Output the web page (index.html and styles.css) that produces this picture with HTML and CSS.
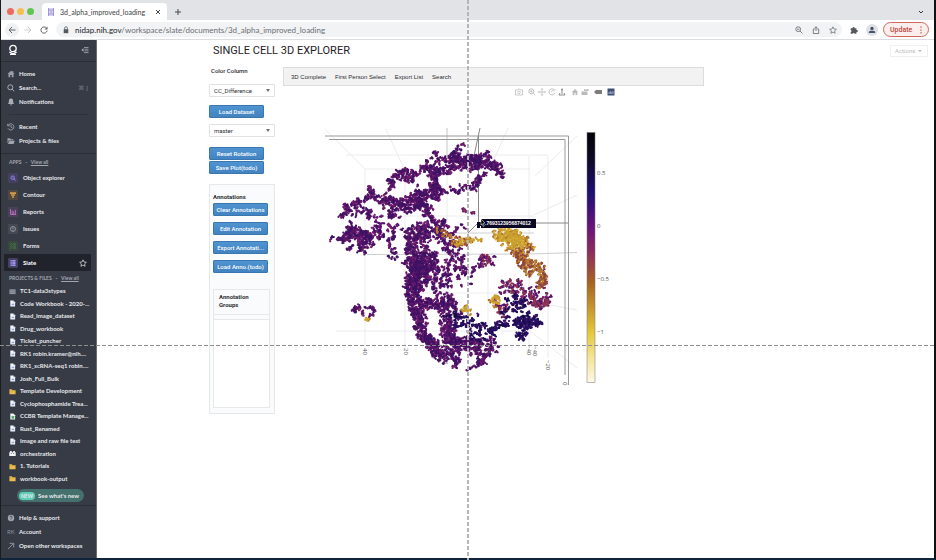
FILE: index.html
```html
<!DOCTYPE html>
<html lang="en">
<head>
  <meta charset="UTF-8" />
  <title>3d_alpha_improved_loading</title>
  <meta name="viewport" content="width=device-width, initial-scale=1.0" />
  <link rel="stylesheet" href="styles.css">
</head>
<body>

  <!-- Icons shared by the sidebar -->
  <svg class="defs" width="0" height="0">
    <symbol id="doc" viewBox="0 0 8 8"><path d="M1.500 .5h3.500l2 2v5H1.500z" fill="#f3f6fb"/><path d="M3 4.200h3v1.800H3z" fill="#8fa9d8"/><path d="M5 .5v2h2z" fill="#9aa3b5"/></symbol>
    <symbol id="sheet" viewBox="0 0 8 8"><path d="M1.500 .5h3.500l2 2v5H1.500z" fill="#eef6f0"/><path d="M3 3.500h3v3H3z" fill="#4aa56c"/></symbol>
    <symbol id="folder" viewBox="0 0 8 8"><path d="M.5 1.500h2.700l.8 1h3.500v4.500h-7z" fill="#e8bd4c"/><path d="M.5 3.200h7" stroke="#c99a2e" stroke-width=".4"/></symbol>
    <symbol id="table" viewBox="0 0 8 8"><path d="M.5 1.500h7v5.500h-7z" fill="#8f959f"/><path d="M.5 3.200h7M.5 5h7" stroke="#6b717c" stroke-width=".5"/></symbol>
    <symbol id="robot" viewBox="0 0 8 8"><path d="M1.200 1.200h2v1.300h1.600V1.200h2v1.300h.9v4.300H.3V2.500h.9z" fill="#f0f2f5"/><path d="M2 4h1.200M4.800 4H6" stroke="#4a505c" stroke-width=".8"/></symbol>
  </svg>

  <div class="window">
    <header class="tabstrip">
      <span class="light red"></span>
      <span class="light yellow"></span>
      <span class="light green"></span>
      <div class="browser-tab">
        <svg width="8" height="10" viewBox="0 0 8 10"><path d="M1 1h6v8H1z" fill="#d9d4f3"/><path d="M1.500 1v8M6.500 1v8M1 3h6M1 7h6M3 5h2" stroke="#8c7fcf" stroke-width=".7" fill="none"/></svg>
        <span>3d_alpha_improved_loading</span>
        <button class="bare" aria-label="Close tab"><svg width="6" height="6" viewBox="0 0 6 6"><path d="M1 1l4 4M5 1L1 5" stroke="#45484d"/></svg></button>
      </div>
      <button class="bare" aria-label="New tab"><svg width="8" height="8" viewBox="0 0 8 8"><path d="M4 1v6M1 4h6" stroke="#45484d"/></svg></button>
      <button class="bare tab-menu" aria-label="Tab search"><svg width="6" height="6" viewBox="0 0 6 6"><path d="M1 2l2 2 2-2" stroke="#333" fill="none"/></svg></button>
    </header>

    <div class="toolbar">
      <button class="bare back" aria-label="Back"><svg width="8" height="8" viewBox="0 0 8 8"><path d="M7.500 4H1M4 1L1 4l3 3" stroke="#5f6368" fill="none"/></svg></button>
      <button class="bare" aria-label="Forward"><svg width="8" height="8" viewBox="0 0 8 8"><path d="M.5 4H7M4 1l3 3-3 3" stroke="#c4c6c9" fill="none" stroke-width=".9"/></svg></button>
      <button class="bare" aria-label="Reload"><svg width="8" height="8" viewBox="0 0 8 8"><path d="M6.600 2.300A3.100 3.100 0 1 0 7.100 4.600" stroke="#5f6368" fill="none"/><path d="M7.500 .5v3h-3z" fill="#5f6368"/></svg></button>
      <div class="address">
        <svg width="6" height="8" viewBox="0 0 6 8"><path d="M.7 3.200h4.600v4H.7z" fill="#55585c"/><path d="M1.600 3.500V2.200a1.400 1.400 0 0 1 2.800 0v1.300" stroke="#55585c" fill="none" stroke-width=".8"/></svg>
        <p><b>nidap.nih.gov</b>/workspace/slate/documents/3d_alpha_improved_loading</p>
        <svg width="8" height="8" viewBox="0 0 8 8"><circle cx="3.200" cy="3.200" r="2.400" stroke="#5f6368" fill="none" stroke-width=".8"/><path d="M2 3.200h2.400M5 5l2.500 2.500" stroke="#5f6368" stroke-width=".8"/></svg>
        <svg width="8" height="8" viewBox="0 0 8 8"><path d="M2.800 3H1.300v4.500h5.400V3H5.200M4 5V.8M2.600 2L4 .7 5.400 2" stroke="#5f6368" fill="none" stroke-width=".8"/></svg>
        <svg width="8" height="8" viewBox="0 0 8 8"><path d="M4 .8l1 2.200 2.400.3-1.800 1.600.5 2.400L4 6.100 1.900 7.300l.5-2.400L.6 3.300 3 3z" stroke="#5f6368" fill="none" stroke-width=".7"/></svg>
      </div>
      <svg class="puzzle" width="8" height="8" viewBox="0 0 8 8"><path d="M.7 2.200h1.800a1.100 1.100 0 1 1 2.200 0h1.700V4a1.100 1.100 0 1 1 0 2.100v1.600H4.600a1.100 1.100 0 0 0-2.100 0H.7V6a1.100 1.100 0 0 0 0-2.100z" fill="#55585c"/></svg>
      <span class="avatar"><svg width="8" height="8" viewBox="0 0 8 8"><circle cx="4" cy="2.500" r="1.700" fill="#4b5368"/><path d="M.8 7V6c0-1.800 6.400-1.800 6.400 0v1z" fill="#4b5368"/></svg></span>
      <button class="update">Update <svg width="2" height="8" viewBox="0 0 2 8"><path d="M.4.5h1.200v1.300H.4zM.4 3.400h1.200v1.300H.4zM.4 6.300h1.200v1.300H.4z" fill="#c5453a"/></svg></button>
    </div>

    <div class="content">
      <nav class="sidebar">
        <div class="brand">
          <svg width="10" height="12" viewBox="0 0 10 12"><circle cx="5" cy="4.500" r="3.200" stroke="#fff" stroke-width="1.300" fill="none"/><path d="M1.300 8L5 9.900 8.700 8M2 10.400h6" stroke="#fff" fill="none" stroke-width="1.200"/></svg>
          <button class="bare" aria-label="Collapse"><svg width="8" height="8" viewBox="0 0 8 8"><path d="M3 1.500h4.500M3.500 3.200h4M3.500 4.900h4M3 6.600h4.500" stroke="#b8bcc4" stroke-width=".7"/><path d="M.5 4l2-1.700v3.400z" fill="#b8bcc4"/></svg></button>
        </div>

        <div class="links">
          <a href="#"><svg width="8" height="8" viewBox="0 0 8 8"><path d="M4 .7L.5 4h1v3.300h1.700V5h1.600v2.300h1.700V4h1L6.300 2.800V1h-1v.9z" fill="#9a9fa9"/></svg>Home</a>
          <a href="#"><svg width="8" height="8" viewBox="0 0 8 8"><circle cx="3.300" cy="3.300" r="2.500" stroke="#a9adb6" fill="none"/><path d="M5 5l2.300 2.300" stroke="#a9adb6"/></svg>Search...<kbd>⌘ J</kbd></a>
          <a href="#"><svg width="8" height="8" viewBox="0 0 8 8"><path d="M4 .6c1.700 0 2.100 1.100 2.100 2.500 0 1.600.4 2.200 1 2.900H.9c.6-.7 1-1.300 1-2.900C1.900 1.700 2.300.6 4 .6zM3 6.500h2c0 1.200-2 1.200-2 0z" fill="#a9adb6"/></svg>Notifications</a>
        </div>
        <div class="links recent">
          <a href="#"><svg width="8" height="8" viewBox="0 0 8 8"><path d="M1 2.500A3.100 3.100 0 1 1 1 5.300M4 2v2.200l1.500 1M.7.8v2h2" stroke="#a9adb6" fill="none" stroke-width=".8"/></svg>Recent</a>
          <a href="#"><svg width="8" height="8" viewBox="0 0 8 8"><path d="M.5 1.300h2.500l.8 1h2.500v1H1.800L.5 6.500z M2.200 3.800h5.600L6.600 7H1z" fill="#9fa4ad"/></svg>Projects &amp; files</a>
        </div>

        <h2>APPS <i>·</i> <a href="#">View all</a></h2>
        <div class="apps">
          <a href="#"><span class="tile violet"><svg width="6" height="6" viewBox="0 0 6 6"><circle cx="2.700" cy="2.700" r="1.800" stroke="#8a7fd6" fill="#5a549b"/><path d="M4 4l1.700 1.700" stroke="#8a7fd6"/></svg></span>Object explorer</a>
          <a href="#"><span class="tile orange"><svg width="6" height="6" viewBox="0 0 6 6"><path d="M0 .2h6v1.700H0zM1 2.300h4v1.500H1zM2 4.200h2v1.600H2z" fill="#d69a4c"/></svg></span>Contour</a>
          <a href="#"><span class="tile pink"><svg width="6" height="6" viewBox="0 0 6 6"><path d="M.5 0v5.500H6M2.200 1.500V5M3.700 2.300V5M5.300.8V5" stroke="#b06bb8" fill="none"/></svg></span>Reports</a>
          <a href="#"><span class="tile grey"><svg width="6" height="6" viewBox="0 0 6 6"><circle cx="3" cy="3" r="2.500" stroke="#aaaeb6" fill="none" stroke-width=".7"/><path d="M3 1.400v2M3 4v.7" stroke="#aaaeb6" stroke-width=".8"/></svg></span>Issues</a>
          <a href="#"><span class="tile green"><svg width="6" height="6" viewBox="0 0 6 6"><path d="M0 1l.6.5L1.600.3M0 3l.6.5 1-1.200M0 5l.6.5 1-1.200M2.600 1H6M2.600 3H6M2.600 5H6" stroke="#4f8d55" fill="none" stroke-width=".7"/></svg></span>Forms</a>
          <a href="#" class="active"><span class="tile violet"><svg width="6" height="6" viewBox="0 0 6 6"><path d="M.5 0h5v6h-5z" fill="#a79ce8"/><path d="M0 1.700h6M0 4.300h6M2 0v6" stroke="#5c51a3" stroke-width=".7"/></svg></span>Slate
            <svg class="star" width="8" height="8" viewBox="0 0 8 8"><path d="M4 .8l1 2.200 2.400.3-1.800 1.600.5 2.400L4 6.100 1.900 7.300l.5-2.400L.6 3.300 3 3z" stroke="#e6e8eb" fill="none" stroke-width=".7"/></svg></a>
        </div>

        <h2>PROJECTS &amp; FILES <i>·</i> <a href="#">View all</a></h2>
        <div class="files">
          <a href="#"><svg><use href="#table"/></svg>TC1-data3stypes</a>
          <a href="#"><svg><use href="#doc"/></svg>Code Workbook - 2020-...</a>
          <a href="#"><svg><use href="#doc"/></svg>Read_Image_dataset</a>
          <a href="#"><svg><use href="#doc"/></svg>Drug_workbook</a>
          <a href="#"><svg><use href="#doc"/></svg>Ticket_puncher</a>
          <a href="#"><svg><use href="#doc"/></svg>RK1 robin.kramer@nih....</a>
          <a href="#"><svg><use href="#doc"/></svg>RK1_scRNA-seq1 robin....</a>
          <a href="#"><svg><use href="#doc"/></svg>Josh_Full_Bulk</a>
          <a href="#"><svg><use href="#folder"/></svg>Template Development</a>
          <a href="#"><svg><use href="#doc"/></svg>Cyclophosphamide Trea...</a>
          <a href="#"><svg><use href="#sheet"/></svg>CCBR Template Manage...</a>
          <a href="#"><svg><use href="#doc"/></svg>Rust_Renamed</a>
          <a href="#"><svg><use href="#doc"/></svg>Image and raw file test</a>
          <a href="#"><svg><use href="#robot"/></svg>orchestration</a>
          <a href="#"><svg><use href="#folder"/></svg>1. Tutorials</a>
          <a href="#"><svg><use href="#folder"/></svg>workbook-output</a>
        </div>
        <button class="whats-new"><span>NEW</span>See what's new</button>

        <div class="links bottom">
          <a href="#"><svg width="8" height="8" viewBox="0 0 8 8"><circle cx="4" cy="4" r="3.200" fill="#a2a6af"/><path d="M2.900 3.200c0-1.500 2.200-1.400 2.200 0 0 .8-1.100.8-1.100 1.500M4 5.400v.8" stroke="#353944" fill="none" stroke-width=".8"/></svg>Help &amp; support</a>
          <a href="#"><span class="initials">RK</span>Account</a>
          <a href="#"><svg width="8" height="8" viewBox="0 0 8 8"><path d="M1 7l5.500-5.500M2.500 1.300h4.200v4.200" stroke="#a2a6af" fill="none" stroke-width=".8"/></svg>Open other workspaces</a>
        </div>
      </nav>

      <main>
        <div class="titlebar">
          <h1>SINGLE CELL 3D EXPLORER</h1>
          <button class="actions" disabled>Actions <span class="caret"></span></button>
        </div>

        <div class="explorer">
          <section class="controls">
            <label for="color-column">Color Column</label>
            <div class="select"><select id="color-column"><option>CC_Difference</option></select></div>
            <button class="primary load">Load Dataset</button>
            <div class="select"><select aria-label="Branch"><option>master</option></select></div>
            <button class="primary reset">Reset Rotation</button>
            <button class="primary">Save Plot(todo)</button>

            <div class="annotations">
              <h3>Annotations</h3>
              <button class="primary">Clear Annotations</button>
              <button class="primary">Edit Annotation</button>
              <button class="primary">Export Annotati...</button>
              <button class="primary">Load Anno.(todo)</button>
              <div class="groups">
                <h3>Annotation Groups</h3>
                <div class="group-list"></div>
              </div>
            </div>
          </section>

          <section class="view">
            <div class="menu">
              <a href="#">3D Complete</a>
              <a href="#">First Person Select</a>
              <a href="#">Export List</a>
              <a href="#">Search</a>
            </div>
            <div class="modebar">
              <svg class="gap" viewBox="0 0 8 8"><path d="M.5 2h2l.7-1h1.600l.7 1h2v5h-7z" stroke="#bbb" fill="none" stroke-width=".8"/><circle cx="4" cy="4.400" r="1.300" stroke="#bbb" fill="none" stroke-width=".8"/></svg>
              <svg viewBox="0 0 8 8"><circle cx="3.300" cy="3.300" r="2.500" stroke="#bbb" fill="none"/><path d="M2 3.300h2.600M3.300 2v2.600M5.300 5.300l2 2" stroke="#bbb" stroke-width=".8"/></svg>
              <svg viewBox="0 0 8 8"><path d="M4 .5v7M.5 4h7M3 1.500l1-1 1 1M3 6.500l1 1 1-1M1.500 3l-1 1 1 1M6.500 3l1 1-1 1" stroke="#bbb" fill="none" stroke-width=".8"/></svg>
              <svg viewBox="0 0 8 8"><path d="M6.500 2.200A3 3 0 1 0 6.800 5M3 4c2-2 3.500-2.500 4.500-2" stroke="#bbb" fill="none" stroke-width=".9"/></svg>
              <svg class="gap" viewBox="0 0 8 8"><path d="M4 1v5M1 7h6M2 5L1 7M6 5l1 2" stroke="#8d8d8d" fill="none"/><circle cx="4" cy="1.500" r="1" fill="#8d8d8d"/></svg>
              <svg viewBox="0 0 8 8"><path d="M4 1L.7 4.200h1V7h1.700V5h1.200v2h1.700V4.200h1z" fill="#bbb"/></svg>
              <svg class="gap" viewBox="0 0 8 8"><path d="M.5 3.500h6V7h-6zM3 3V1h1.500v1.500L6 1h1.500v2z" fill="#bbb"/></svg>
              <svg class="gap" viewBox="0 0 8 8"><path d="M0 4l2-2h6v4H2z" fill="#7d7d7d"/></svg>
              <svg viewBox="0 0 8 8"><path d="M.5 .5h7v7h-7z" fill="#3f4f75"/><path d="M2 6V4M3.300 6V3M4.700 6V4M6 6V3" stroke="#c7cfe4" stroke-width=".7"/></svg>
            </div>
            <svg class="plot" viewBox="283 100 421 300">
              <defs>
                <linearGradient id="scale" x1="0" y1="0" x2="0" y2="1">
                  <stop offset="0" stop-color="#040208"/>
                  <stop offset=".1" stop-color="#0e0924"/>
                  <stop offset=".24" stop-color="#1e0f73"/>
                  <stop offset=".38" stop-color="#6a1479"/>
                  <stop offset=".48" stop-color="#8b2f5e"/>
                  <stop offset=".6" stop-color="#a66320"/>
                  <stop offset=".8" stop-color="#e4c83a"/>
                  <stop offset=".9" stop-color="#f3e497"/>
                  <stop offset="1" stop-color="#fdf8e6"/>
                </linearGradient>
              </defs>
              <g class="grid">
                <path d="M365 169V352M405 169V348M447 128V360M488 254V350M529 156V346M548 156V358M336 331H530M346 155H548M365 169H530M365 216H534M405 293H540M325 129l40 40M386 129l19 42M508 128l-18 40M577 136l-42 40M534 215l43-20M534 302l43 8M530 331l47 37"/>
                <path class="mid" d="M429 233H534M367 254.500L530 254 577 252.500M447 128v35"/>
                <path class="axis" d="M325 136H568.500V385M329 139.500H565V375"/>
                <path class="spike" d="M480 128l-6 28M478.500 136v87H568M478 223l-10 10"/>
              </g>
              <g id="points"></g>
              <rect x="587" y="132.500" width="8" height="250" fill="url(#scale)" stroke="#777" stroke-width=".5"/>
              <g class="ticks">
                <text x="597" y="175">0.5</text>
                <text x="597" y="228">0</text>
                <text x="597" y="281">−0.5</text>
                <text x="597" y="334">−1</text>
                <text transform="translate(363 348) rotate(90)">40</text>
                <text transform="translate(404 348) rotate(90)">20</text>
                <text transform="translate(486 350) rotate(90)">0</text>
                <text transform="translate(527 345) rotate(90)">−40</text>
                <text transform="translate(533 346) rotate(90)">−40</text>
                <text transform="translate(546 360) rotate(90)">−20</text>
                <text transform="translate(563 382) rotate(90)">0</text>
                <text x="445" y="364">x</text>
              </g>
              <path d="M477 222h4v-3h55v9h-55v-2h-1v2h-3z" fill="#0b0826"/>
              <text class="hover" x="485" y="225">.7693123956874012</text>
              <path d="M481 219l4 4-2 .3 1.300 2.600-1.200.5-1-2.500-1.100 1.100z" fill="#000" stroke="#fff" stroke-width=".5"/>
            </svg>
          </section>
        </div>
      </main>
    </div>
  </div>

  <div class="guide vertical"></div>
  <div class="guide horizontal"></div>

  <script src="plot.js"></script>
</body>
</html>
```

FILE: styles.css
```css
* {
  box-sizing: border-box;
}

body {
  font-family: Roboto, "Liberation Sans", sans-serif;
  font-size: 6px;
  line-height: 8px;
  margin: 0;
  color: #2b2d31;
  background: #fff;
}

h1, h2, h3, p {
  margin: 0;
}

a {
  color: inherit;
  text-decoration: none;
}

svg {
  flex: none;
}

button, select {
  font: inherit;
  color: inherit;
}

.defs {
  position: absolute;
}

.bare {
  display: flex;
  border: 0;
  padding: 0;
  background: none;
}

.window {
  display: flex;
  flex-direction: column;
  height: 100vh;
  min-height: 560px;
  border-left: 1px solid #1c1c1f;
  border-right: 2px solid #111;
  border-bottom: 2px solid #10243c;
}

/* Browser chrome */
.tabstrip {
  display: flex;
  align-items: center;
  height: 20px;
  padding: 3px 10px 0 6px;
  background: #e2e3e6;
}

.light {
  width: 7px;
  height: 7px;
  margin-right: 3px;
  border-radius: 50%;
}

.red { background: #ec6a5e; }
.yellow { background: #f4bf4f; }
.green { background: #61c554; }

.browser-tab {
  display: flex;
  align-items: center;
  align-self: stretch;
  width: 125px;
  margin: 0 7px 0 5px;
  padding: 0 6px 0 5px;
  gap: 5px;
  background: #fff;
  border-radius: 4px 4px 0 0;
  color: #3c4043;
  font-family: Lato, sans-serif;
  font-size: 7px;
}

.browser-tab .bare,
.tab-menu {
  margin-left: auto;
}

.toolbar {
  display: flex;
  align-items: center;
  height: 20px;
  padding: 0 5px 0 4px;
  gap: 8px;
  border-bottom: 1px solid #dcdde0;
}

.back {
  padding: 3px;
  margin-right: -3px;
  border-radius: 50%;
  background: #f0f1f2;
}

.address {
  display: flex;
  align-items: center;
  flex: 1;
  height: 15px;
  padding: 0 5px 0 7px;
  gap: 9px;
  border-radius: 8px;
  background: #f1f3f4;
  color: #6b6e73;
  font-family: Lato, sans-serif;
  font-size: 8px;
}

.address svg:first-child {
  margin-right: -3px;
}

.address p {
  flex: 1;
}

.address b {
  color: #202124;
  font-weight: normal;
}

.avatar {
  display: flex;
  padding: 2px;
  margin-right: -3px;
  border-radius: 50%;
  background: #dfe1e8;
}

.update {
  display: flex;
  align-items: center;
  justify-content: space-between;
  width: 46px;
  height: 15px;
  padding: 0 6px;
  border: 1px solid #d0675d;
  border-radius: 8px;
  background: #fbefee;
  color: #c5453a;
  font-size: 7px;
  font-weight: 500;
}

.content {
  display: flex;
  flex: 1;
}

/* Sidebar */
.sidebar {
  display: flex;
  flex-direction: column;
  width: 96px;
  background: #373b46;
  border-right: 1px solid #6b6a75;
  color: #e6e8eb;
  font-family: Lato, sans-serif;
  font-weight: 700;
}

.brand {
  display: flex;
  align-items: center;
  justify-content: space-between;
  height: 22px;
  padding: 0 7px 2px;
  border-bottom: 1px solid #2a2d36;
}

.links {
  padding: 5px 0;
}

.links a {
  display: flex;
  align-items: center;
  height: 14px;
  padding: 0 8px 0 6px;
  gap: 4px;
}

.links kbd {
  margin-left: auto;
  color: #7c818c;
  font: 6px/8px "DejaVu Sans", sans-serif;
}

.recent {
  margin-bottom: 4px;
  padding-top: 0;
  border-bottom: 1px solid #2a2d36;
}

.recent::before {
  content: "";
  display: block;
  margin: 0 8px 5px;
  border-top: 1px solid #2e323b;
}

.sidebar h2 {
  display: flex;
  padding-left: 8px;
  gap: 4px;
  color: #a2a6af;
  font-size: 5px;
  font-weight: 700;
}

.sidebar h2 a {
  text-decoration: underline;
}

.apps {
  padding: 3px 5px 3px 3px;
}

.apps a {
  display: flex;
  align-items: center;
  height: 17px;
  padding: 0 4px;
  gap: 5px;
  border-radius: 1px;
}

.apps .active {
  background: #20232b;
  color: #fff;
}

.star {
  margin-left: auto;
}

.tile {
  display: flex;
  padding: 2px;
  border-radius: 1px;
}

.violet { background: #43415f; }
.orange { background: #504840; }
.pink { background: #4b405a; }
.grey { background: #444852; }
.green.tile { background: #38483f; }

.files {
  display: flex;
  flex: 1;
  flex-direction: column;
  justify-content: space-between;
  padding: 5px 0 6px 8px;
}

.files a {
  display: flex;
  align-items: center;
  gap: 4px;
  white-space: nowrap;
}

.files svg {
  width: 7px;
  height: 7px;
}

.whats-new {
  display: flex;
  align-items: center;
  align-self: flex-start;
  height: 13px;
  margin: 0 16px 3px;
  padding: 0 5px 0 2px;
  gap: 3px;
  border: 0;
  border-radius: 7px;
  background: #44706d;
  white-space: nowrap;
}

.whats-new span {
  padding: 0 2px;
  border-radius: 4px;
  background: #62cdb5;
  font-size: 5px;
}

.bottom {
  border-top: 1px solid #2a2d36;
}

.initials {
  width: 8px;
  color: #8b909a;
  font-weight: 400;
}

/* Slate document */
main {
  flex: 1;
}

.titlebar {
  display: flex;
  align-items: center;
  justify-content: space-between;
  padding: 5px 6px 0 116px;
}

h1 {
  color: #1f2125;
  font-size: 11px;
  font-weight: 400;
  line-height: 12px;
}

.actions {
  display: flex;
  align-items: center;
  justify-content: space-between;
  width: 38px;
  height: 12px;
  padding: 0 5px 0 4px;
  border: 1px solid #f0f0f1;
  background: #fff;
  color: #bbb;
}

.caret {
  border: 2px solid transparent;
  border-top-color: #bbb;
  border-bottom: 0;
}

.explorer {
  display: flex;
  align-items: flex-start;
  padding-left: 112px;
  gap: 8px;
}

.controls {
  width: 66px;
  padding-top: 10px;
}

.controls label {
  display: block;
  padding: 0 2px 9px;
  font-weight: 500;
}

.select {
  position: relative;
}

.select select {
  display: block;
  width: 100%;
  height: 13px;
  padding: 0 4px;
  appearance: none;
  border: 1px solid #dfe1e4;
  border-radius: 1px;
  background: #fff;
}

.select::after {
  content: "";
  position: absolute;
  top: 5px;
  right: 5px;
  border: 2px solid transparent;
  border-top: 3px solid #6f7378;
  border-bottom: 0;
}

.primary {
  display: block;
  width: 55px;
  height: 13px;
  margin-bottom: 1px;
  padding: 0;
  border: 1px solid #3a76b0;
  border-radius: 1px;
  background: linear-gradient(to bottom, #4f94d1, #4283c0);
  color: #fff;
  font-weight: 500;
  white-space: nowrap;
}

.load {
  margin: 8px 0 6px;
}

.reset {
  margin-top: 10px;
}

.annotations {
  margin-top: 10px;
  padding: 8px 4px 5px 3px;
  border: 1px solid #e6e8ea;
  background: #fafbfc;
}

.annotations h3 {
  padding-bottom: 2px;
  font-size: 6px;
  font-weight: 700;
}

.annotations .primary {
  margin-bottom: 6px;
}

.groups {
  margin-top: 16px;
  border: 1px solid #e6e8ea;
}

.groups h3 {
  padding: 3px 20px 5px 5px;
  border-bottom: 1px solid #e6e8ea;
  line-height: 8px;
}

.group-list {
  height: 88px;
  margin-top: 4px;
  border-top: 1px solid #e6e8ea;
  background: #fff;
}

.view {
  flex: 1;
  max-width: 421px;
  padding-top: 10px;
}

.menu {
  display: flex;
  align-items: center;
  height: 19px;
  padding: 0 7px;
  gap: 9px;
  border: 1px solid #dcdcdc;
  background: #f2f2f2;
  font-family: "Liberation Sans", Arial, sans-serif;
}

.modebar {
  display: flex;
  justify-content: flex-end;
  padding: 2px 89px 0 0;
  gap: 2px;
}

.modebar svg {
  width: 8px;
  height: 8px;
}

.modebar .gap {
  margin-right: 3px;
}

.plot {
  display: block;
  width: 100%;
  margin-top: 4px;
}

.grid path {
  fill: none;
  stroke: #ececec;
}

.grid .mid {
  stroke: #cfcfcf;
}

.grid .axis {
  stroke: #999;
}

.grid .spike {
  stroke: #888;
  stroke-width: 1px;
}

#points path {
  fill: none;
  stroke-linecap: round;
}

.ticks {
  fill: #555;
  font: 6px "Open Sans", sans-serif;
}

.hover {
  fill: #fff;
  font: bold 5px "Liberation Sans", Arial, sans-serif;
}

/* Crosshair over the whole window */
.guide {
  position: fixed;
  pointer-events: none;
}

.vertical {
  top: 0;
  bottom: 0;
  left: 50%;
  width: 2px;
  margin-left: -1px;
  background: repeating-linear-gradient(to bottom, #b5b5b5 0 4px, transparent 4px 6px);
}

.horizontal {
  top: 345px;
  left: 0;
  right: 0;
  height: 1px;
  background: repeating-linear-gradient(to right, #8e8e8e 0 4px, transparent 4px 6px);
}
```

FILE: plot.js
```js
// Cell clusters: palette, spread, number of cells, then the line they follow
const clusters = [
  ['p', 2, 50, [462,145, 455,152, 447,156]],
  ['p', 5, 330, [430,154, 442,161, 458,157, 470,162, 480,160, 488,155]],
  ['p', 8, 330, [452,163, 466,161, 478,164]],
  ['p', 5, 160, [484,163, 493,164, 498,170]],
  ['p', 2, 40, [497,170, 504,178]],
  ['p', 4, 190, [480,166, 481,178, 474,186, 458,189, 442,191]],
  ['p', 4, 280, [390,188, 392,179, 403,171, 417,173, 428,167]],
  ['p', 6, 380, [430,166, 435,176, 433,187, 437,196]],
  ['p', 4, 110, [437,170, 449,172, 456,166]],
  ['p', 3, 60, [404,177, 412,180]],
  ['p', 5, 180, [417,190, 428,194, 446,191]],
  ['p', 5, 190, [383,197, 393,202, 400,206]],
  ['p', 8, 420, [405,206, 413,202, 422,200]],
  ['p', 5, 90, [424,206, 430,211]],
  ['p', 3, 230, [370,188, 374,196, 360,200, 347,207, 342,218]],
  ['p', 5, 120, [352,210, 362,208, 371,215]],
  ['p', 3, 50, [375,195, 384,203]],
  ['p', 4, 170, [333,238, 342,240, 350,235, 353,222]],
  ['p', 8, 430, [350,232, 360,235, 368,241, 379,234]],
  ['p', 4, 70, [378,220, 377,234]],
  ['p', 2, 70, [348,249, 356,245, 367,254]],
  ['p', 5, 200, [389,208, 394,218, 390,231, 393,246, 392,258]],
  ['p', 6, 260, [408,228, 412,242, 411,254]],
  ['p', 8, 900, [411,260, 415,272, 412,283, 414,299, 417,312]],
  ['p', 8, 520, [416,256, 426,263, 422,275, 419,287]],
  ['p', 4, 170, [424,251, 433,253, 434,264, 427,270]],
  ['p', 7, 450, [414,303, 420,318, 419,329, 428,341]],
  ['p', 7, 400, [428,341, 436,349, 443,357]],
  ['p', 6, 280, [423,303, 436,302, 446,309]],
  ['p', 6, 130, [445,300, 460,311]],
  ['p', 8, 480, [447,312, 447,326, 450,339, 456,351]],
  ['p', 3, 100, [451,354, 457,361, 455,369]],
  ['p', 12, 330, [426,228, 438,226, 446,240]],
  ['p', 8, 220, [418,226, 424,244]],
  ['p', 8, 180, [450,238, 453,255, 460,270]],
  ['p', 15, 300, [435,265, 441,288]],
  ['p', 4, 60, [460,256, 463,270, 459,284]],
  ['p', 2, 30, [473,266, 470,285]],
  ['m', 2, 25, [464,209, 472,213, 478,218]],
  ['p', 2, 20, [455,230, 463,226]],
  ['p', 6, 330, [456,342, 468,344, 480,344, 496,342]],
  ['p', 5, 150, [470,350, 484,355, 494,350]],
  ['p', 3, 80, [469,368, 477,365, 484,361]],
  ['d', 8, 150, [448,315, 459,324, 474,322]],
  ['d', 5, 150, [475,323, 486,330, 494,331, 499,321]],
  ['d', 6, 60, [469,333, 482,337]],
  ['m', 2, 60, [483,253, 478,266, 489,261, 496,267]],
  ['m', 4, 40, [482,260, 492,257]],
  ['o', 5, 100, [438,232, 450,239, 468,241]],
  ['y', 2, 70, [456,246, 464,240, 480,240]],
  ['y', 6, 330, [495,235, 506,235, 519,237]],
  ['y', 7, 260, [506,243, 517,242, 527,246]],
  ['o', 4, 110, [526,239, 529,251, 521,252]],
  ['o', 6, 280, [516,251, 522,261, 531,272]],
  ['o', 5, 240, [533,262, 540,269, 545,279, 540,286]],
  ['m', 8, 150, [502,287, 513,284, 520,294]],
  ['y', 4, 65, [493,302, 498,295, 496,306]],
  ['m', 6, 80, [500,304, 505,314]],
  ['m', 5, 200, [531,300, 542,306, 548,298]],
  ['m', 5, 65, [525,295, 536,290]],
  ['d', 13, 190, [508,305, 525,310]],
  ['d', 6, 220, [517,323, 526,321, 534,319]],
  ['d', 4, 150, [517,339, 526,330, 541,320]],
  ['d', 4, 45, [503,320, 510,328]],
  ['y', 3, 50, [463,311, 466,307, 468,314]],
  ['p', 1, 75, [353,310, 360,307, 373,308, 373,314, 366,318]],
  ['p', 1, 16, [353,310, 359,314]],
  ['m', 3, 16, [357,313, 364,314]],
  ['y', 1, 14, [364,321, 370,318]]
];

const palettes = {
  p: ['#65156e', '#65156e', '#5c1470', '#6e1a6c', '#521468', '#74206a', '#3a1163'],
  m: ['#65156e', '#7c2560', '#8f3350', '#4d1368', '#5c1470'],
  d: ['#1d0f5e', '#2a1064', '#150b45', '#4d1368', '#3a1163'],
  o: ['#a3601f', '#b7792a', '#8f4340', '#c9982f', '#7c2560'],
  y: ['#c9982f', '#d9b437', '#b7792a', '#c9a02f', '#a3601f']
};

// fixed seed, so the plot looks the same on every load
let seed = 7;
function random() {
  seed = (seed * 16807) % 2147483647;
  return seed / 2147483647;
}

const marks = {};

clusters.forEach(([palette, spread, count, line]) => {
  const colors = palettes[palette];
  const segments = line.length / 2 - 1;
  let left = count;

  while (left > 0) {
    const at = random() * segments;
    const i = Math.floor(at) * 2;
    const t = at - Math.floor(at);
    const angle = random() * Math.PI * 2;
    const r = Math.sqrt(random()) * spread;
    let x = line[i] + (line[i + 2] - line[i]) * t + Math.cos(angle) * r;
    let y = line[i + 1] + (line[i + 3] - line[i + 1]) * t + Math.sin(angle) * r;

    // cells come in short strings
    for (let k = 0; k < 4 && left > 0; k++, left--) {
      const color = colors[Math.floor(random() * colors.length)];
      marks[color] = (marks[color] || '') + `M${x.toFixed(1)} ${y.toFixed(1)}h.01`;
      x += (random() - 0.5) * 3;
      y += (random() - 0.5) * 3;
    }
  }
});

const group = document.getElementById('points');
Object.keys(marks).forEach(color => {
  const path = document.createElementNS('http://www.w3.org/2000/svg', 'path');
  path.setAttribute('d', marks[color]);
  path.setAttribute('stroke', color);
  path.setAttribute('stroke-width', 2.2);
  group.appendChild(path);
});
```
